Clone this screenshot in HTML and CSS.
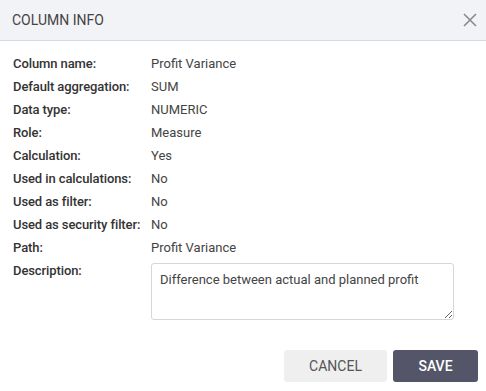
FILE: index.html
```
<!DOCTYPE html>
<html lang="en">
<head>
    <meta charset="UTF-8">
    <meta name="viewport" content="width=device-width, initial-scale=1.0">
    <title>Column Info</title>
    <link rel="stylesheet" href="styles.css">
</head>
<body>

<div class="dialog">
    <div class="dialog-header">
        <span class="dialog-title">COLUMN INFO</span>
        <button class="close-btn" aria-label="Close">
            <svg width="14" height="14" viewBox="0 0 14 14">
                <path d="M1 1 L13 13 M13 1 L1 13" stroke="#8a8a8a" stroke-width="1.6" fill="none"/>
            </svg>
        </button>
    </div>

    <div class="dialog-body">
        <div class="info-row"><span class="info-label">Column name:</span><span class="info-value">Profit Variance</span></div>
        <div class="info-row"><span class="info-label">Default aggregation:</span><span class="info-value">SUM</span></div>
        <div class="info-row"><span class="info-label">Data type:</span><span class="info-value">NUMERIC</span></div>
        <div class="info-row"><span class="info-label">Role:</span><span class="info-value">Measure</span></div>
        <div class="info-row"><span class="info-label">Calculation:</span><span class="info-value">Yes</span></div>
        <div class="info-row"><span class="info-label">Used in calculations:</span><span class="info-value">No</span></div>
        <div class="info-row"><span class="info-label">Used as filter:</span><span class="info-value">No</span></div>
        <div class="info-row"><span class="info-label">Used as security filter:</span><span class="info-value">No</span></div>
        <div class="info-row"><span class="info-label">Path:</span><span class="info-value">Profit Variance</span></div>
        <div class="info-row">
            <span class="info-label">Description:</span>
            <textarea class="description">Difference between actual and planned profit</textarea>
        </div>
    </div>

    <div class="dialog-footer">
        <button class="btn btn-cancel">CANCEL</button>
        <button class="btn btn-save">SAVE</button>
    </div>
</div>

</body>
</html>
```

FILE: styles.css
```
body {
    margin: 0;
    font-family: 'Roboto', 'Liberation Sans', sans-serif;
    background-color: #fff;
}

.dialog {
    width: 486px;
    height: 391px;
    display: flex;
    flex-direction: column;
}

.dialog-header {
    height: 40px;
    display: flex;
    align-items: center;
    justify-content: space-between;
    padding: 0 9px 0 12px;
    background-color: #f2f3f7;
    border-bottom: 1px solid #d6d9e1;
}

.dialog-title {
    font-size: 14px;
    color: #444;
}

.close-btn {
    border: none;
    background: none;
    padding: 0;
    width: 14px;
    height: 14px;
    display: flex;
    cursor: pointer;
}

.dialog-body {
    padding: 11px 32px 0 13px;
}

.info-row {
    display: flex;
    align-items: flex-start;
    line-height: 23px;
    font-size: 13px;
}

.info-label {
    width: 138px;
    flex-shrink: 0;
    font-weight: 500;
    color: #333;
    white-space: nowrap;
    letter-spacing: -0.1px;
}

.info-value {
    color: #444;
}

.description {
    margin-top: 4px;
    width: 303px;
    height: 57px;
    box-sizing: border-box;
    padding: 7px 8px;
    font-family: 'Roboto', 'Liberation Sans', sans-serif;
    font-size: 13px;
    line-height: 18px;
    color: #444;
    border: 1px solid #d3d6dd;
    border-radius: 3px;
    outline: none;
}

.dialog-footer {
    display: flex;
    justify-content: flex-end;
    gap: 6px;
    padding: 30px 8px 0 0;
}

.btn {
    height: 32px;
    border: none;
    border-radius: 3px;
    font-family: 'Roboto', 'Liberation Sans', sans-serif;
    font-size: 14px;
    cursor: pointer;
}

.btn-cancel {
    width: 103px;
    background-color: #efefef;
    color: #555;
}

.btn-save {
    width: 85px;
    background-color: #545569;
    color: #fff;
    font-weight: 500;
}
```
